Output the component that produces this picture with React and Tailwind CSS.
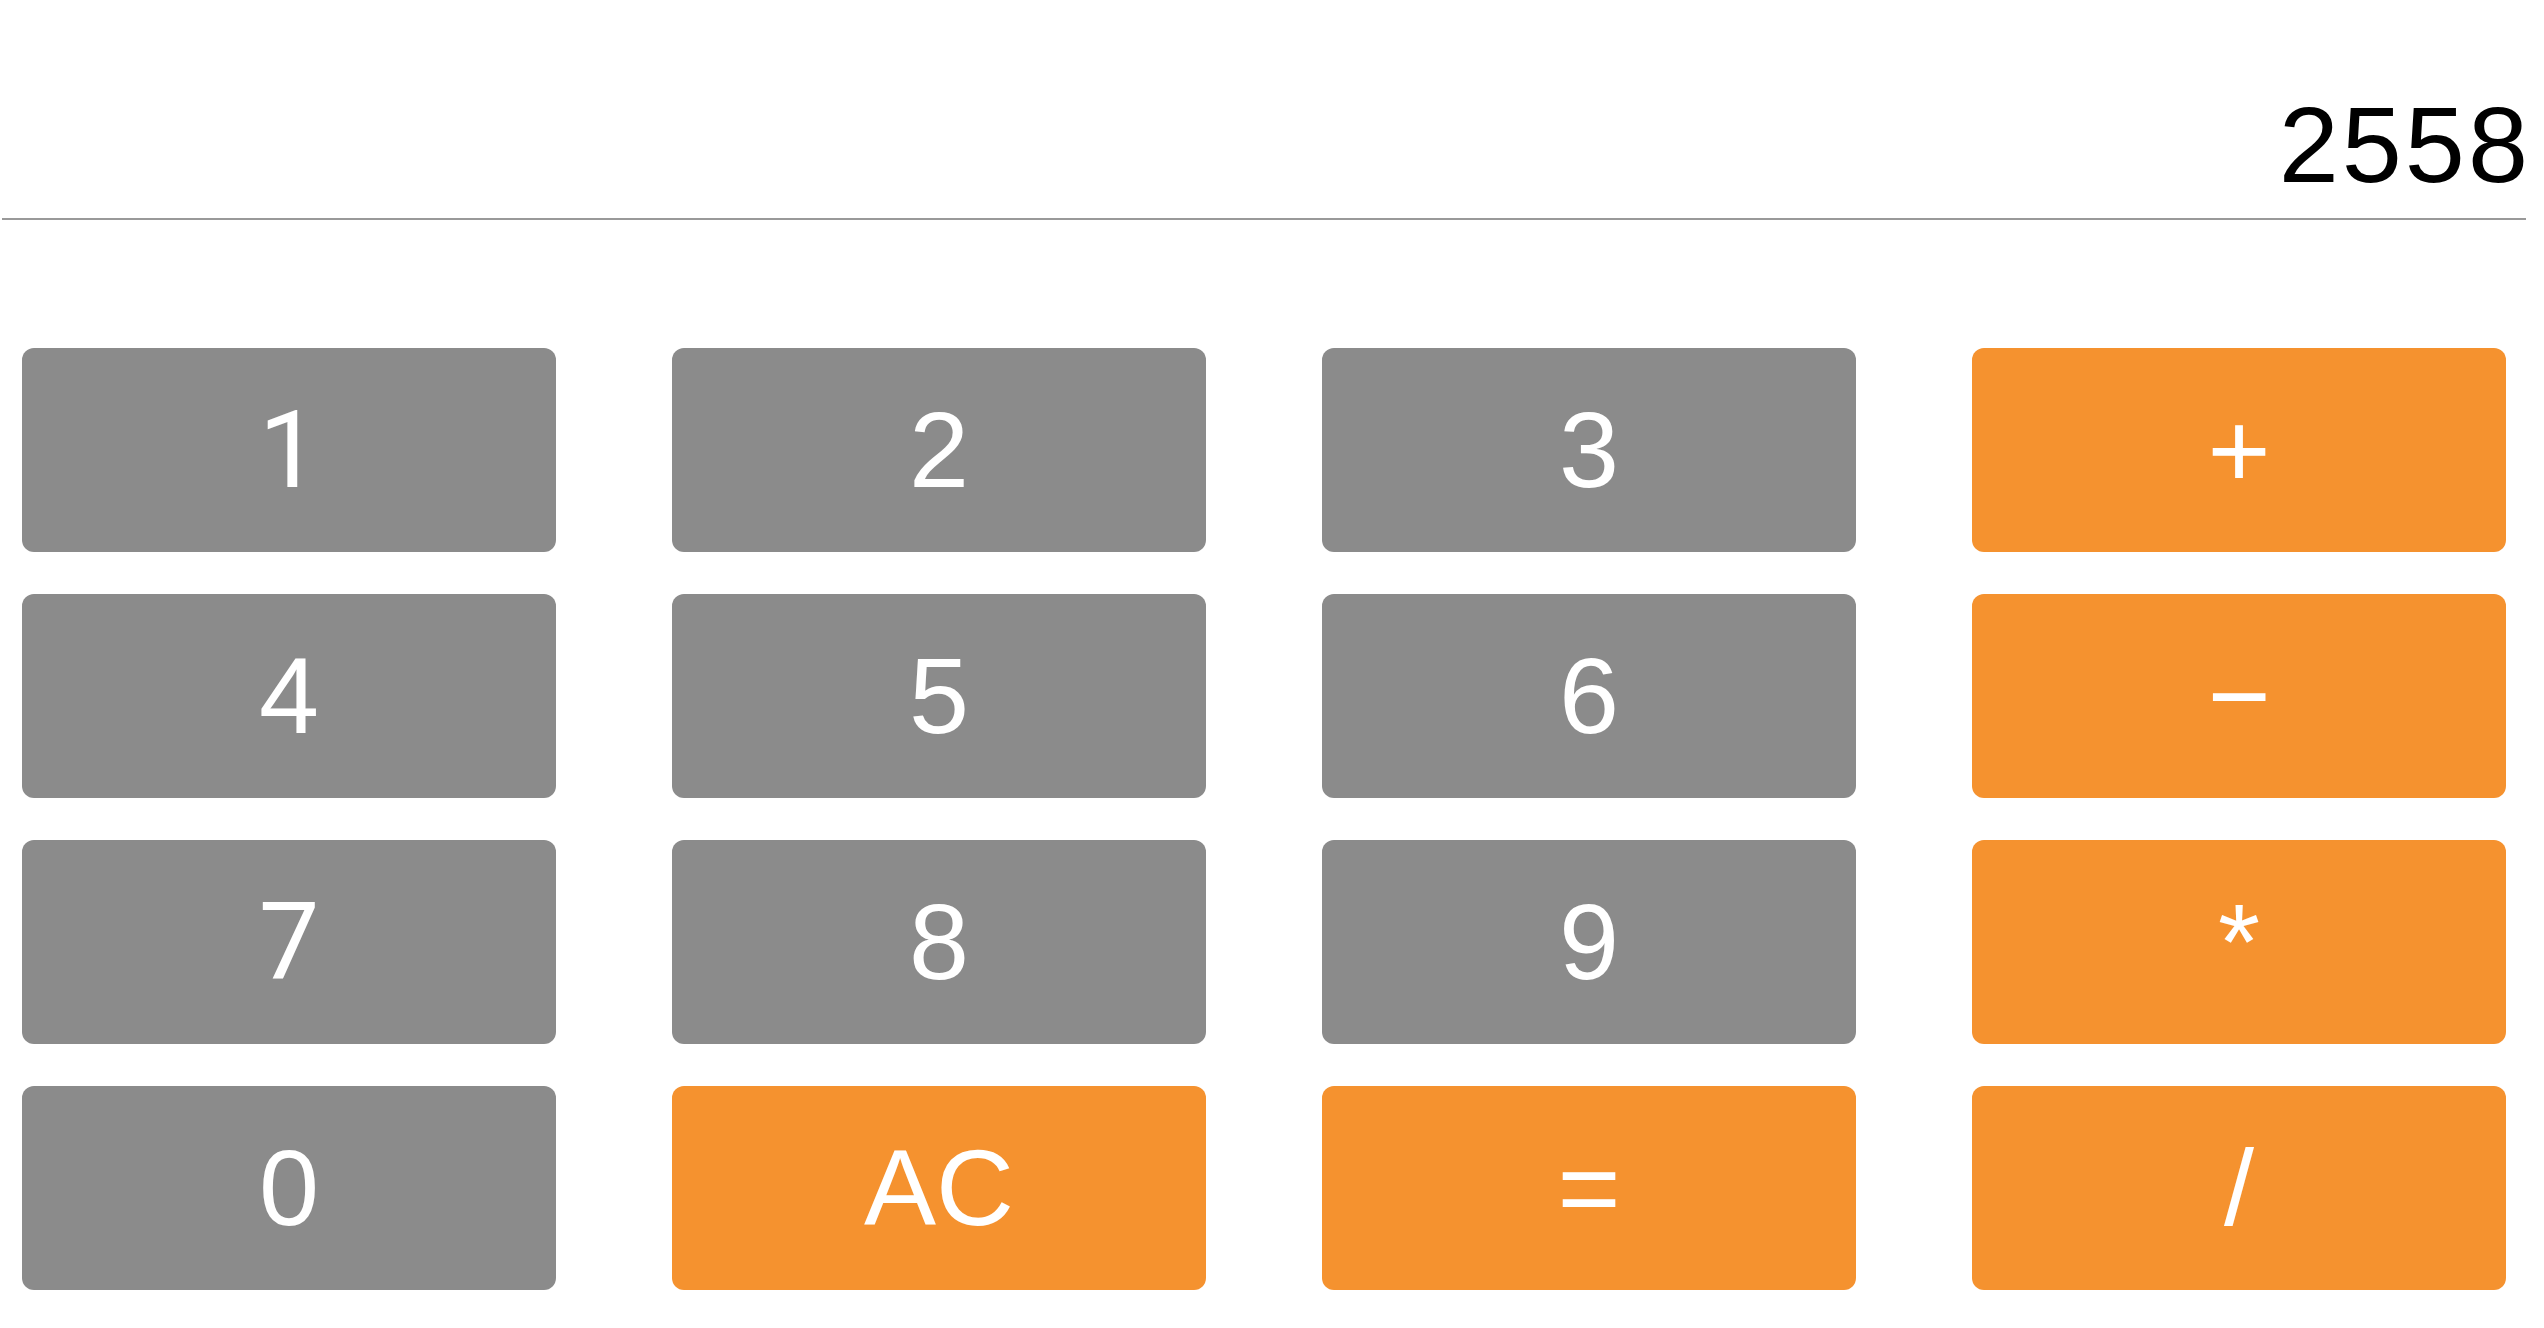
import React from "react";

const keys = [
  { l: "1", o: false, r: true },
  { l: "2", o: false },
  { l: "3", o: false },
  { l: "+", o: true },
  { l: "4", o: false },
  { l: "5", o: false },
  { l: "6", o: false },
  { l: "\u2212", o: true },
  { l: "7", o: false, r: true },
  { l: "8", o: false },
  { l: "9", o: false },
  { l: "*", o: true },
  { l: "0", o: false },
  { l: "AC", o: true },
  { l: "=", o: true },
  { l: "/", o: true },
];

export default function App() {
  return (
    <div
      className="min-h-screen bg-white"
      style={{ fontFamily: '"Liberation Sans", Arial, Helvetica, sans-serif' }}
    >
      <div className="pt-[91px] pr-[13px] text-right text-[108px] leading-none tracking-[3px] text-black">
        2558
      </div>
      <div className="mt-[19px] ml-[2px] w-[2524px] h-[2px] bg-[#999999]" />
      <div className="mt-[128px] ml-[22px] grid grid-cols-[repeat(4,534px)] auto-rows-[204px] gap-x-[116px] gap-y-[42px]">
        {keys.map((k) => (
          <button
            key={k.l}
            className={
              "flex items-center justify-center rounded-[12px] text-[108px] leading-none text-white " +
              (k.o ? "bg-[#f5922f]" : "bg-[#8b8b8b]")
            }
          >
            {k.r ? (
              <span className="font-[Roboto]">{k.l}</span>
            ) : (
              k.l
            )}
          </button>
        ))}
      </div>
    </div>
  );
}
